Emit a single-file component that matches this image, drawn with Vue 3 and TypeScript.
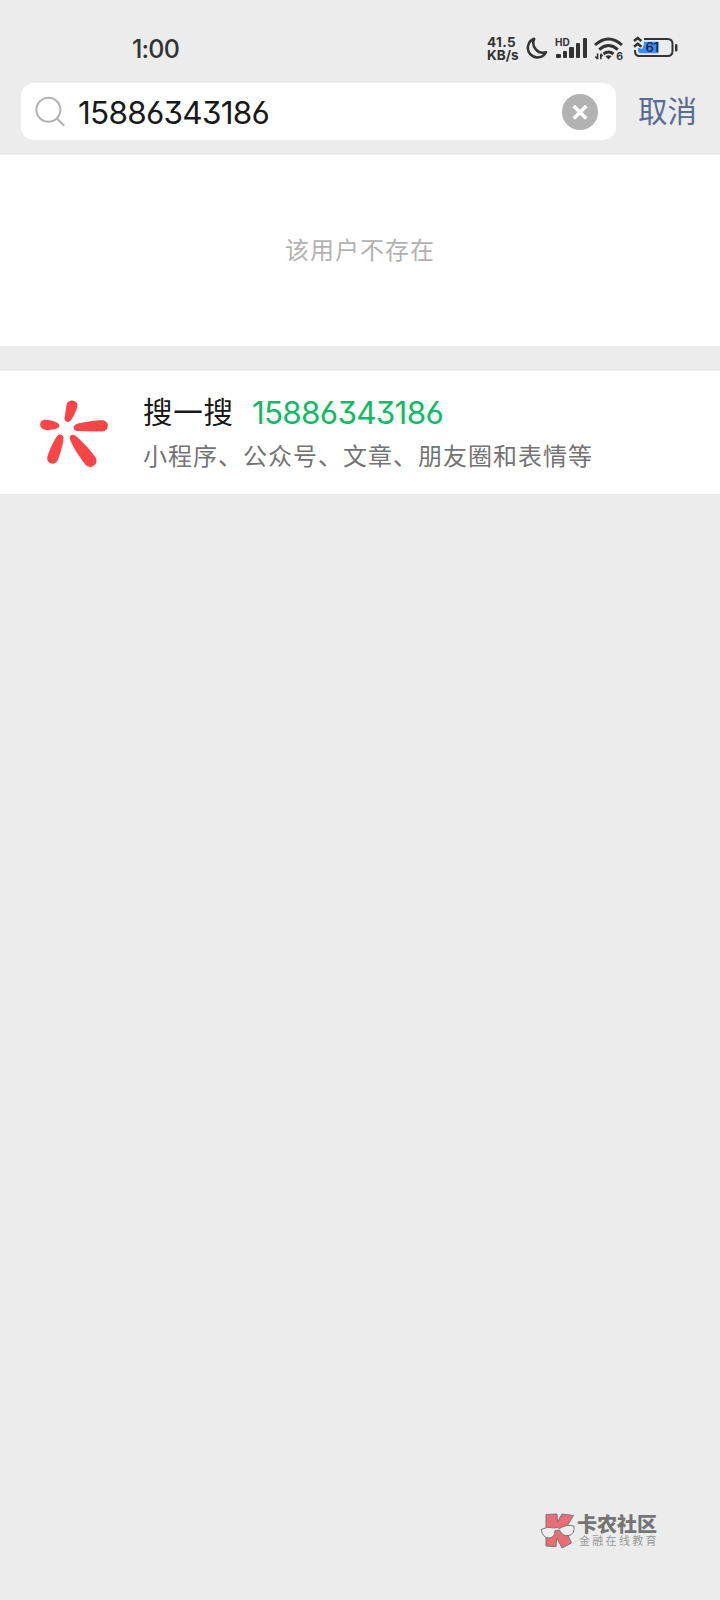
<script setup lang="ts">
import { ref } from 'vue'

const query = ref('15886343186')
const signalBars = [4, 7, 11, 15, 20]
</script>

<template>
  <main class="screen">
    <header class="status">
      <span class="clock">1:00</span>
      <div class="indicators">
        <div class="speed"><span>41.5</span><span>KB/s</span></div>
        <svg class="moon" width="22" height="23" viewBox="0 0 22 23">
          <path d="M8.2 1.8 A9.6 9.6 0 1 0 20 15.2 A9.8 9.8 0 0 1 8.2 1.8Z" fill="none" stroke="#333" stroke-width="2.5" stroke-linejoin="round" />
        </svg>
        <div class="signal">
          <span class="hd">HD</span>
          <i v-for="h in signalBars" :key="h" class="bar" :style="{ height: h + 'px' }"></i>
        </div>
        <svg class="wifi" width="30" height="24" viewBox="0 0 30 24">
          <g fill="none" stroke="#333" stroke-width="3">
            <path d="M1 8 Q14.5 -4 28 8" />
            <path d="M5.2 12.6 Q14.5 4.5 23.8 12.6" />
            <path d="M9.5 17 Q14.5 12.9 19.5 17" />
          </g>
          <path d="M11.5 19.2 Q14.5 17.2 17.5 19.2 L14.5 22.4Z" fill="#333" />
          <path d="M3.6 16.5v5.7M1.4 19.6l2.2 2.4M6.8 22.2V16.8M6.8 17l1.8 2.3" fill="none" stroke="#333" stroke-width="1.6" />
          <text x="22.3" y="23.2" class="wifi-no">6</text>
        </svg>
        <svg class="battery" width="46" height="24" viewBox="0 0 46 24">
          <path d="M11 3 H34.5 Q39.5 3 39.5 8 V15 Q39.5 20 34.5 20 H6.5 Q2 20 2 15 V14" fill="none" stroke="#333" stroke-width="2" />
          <path d="M5 11.5 L9 13 L11 8 V5.7 H25.5 V17.3 H8 Q5 17.3 5 14Z" fill="#3b8dfa" />
          <path d="M1 4.9 L4.7 1.9 L8.4 4.9M1 10.7 L4.7 7.7 L8.4 10.7" fill="none" stroke="#333" stroke-width="2.6" stroke-linejoin="round" />
          <path d="M43.2 9.2v5" stroke="#333" stroke-width="2.4" stroke-linecap="round" />
          <text x="12.4" y="16.4" class="battery-no">61</text>
        </svg>
      </div>
    </header>

    <section class="search">
      <div class="field">
        <svg class="lens" width="30" height="31" viewBox="0 0 30 31">
          <g fill="none" stroke="#b2b2b2" stroke-width="2">
            <circle cx="13.4" cy="13.8" r="12" />
            <path d="M21.9 22.5 L29.2 29.8" />
          </g>
        </svg>
        <span class="number">{{ query }}</span>
        <svg class="clear" width="36" height="36" viewBox="0 0 36 36">
          <circle cx="18" cy="18" r="18" fill="#b2b2b2" />
          <path d="M11.7 12 L24.3 24.6 M24.3 12 L11.7 24.6" stroke="#fff" stroke-width="3.6" />
        </svg>
      </div>
      <span class="cancel">取消</span>
    </section>

    <section class="empty">该用户不存在</section>

    <section class="result">
      <svg class="spark" width="68" height="68" viewBox="0 0 68 68" fill="#fa4548">
        <path d="M26.6 4.4 C27.8-1.4 38.1-.5 37.4 6.2 C37 9.5 32.3 19 30.5 20.8 C28 23.2 24.3 21.5 24.5 18.3Z" />
        <path d="M5 19.8 C8 19.5 15.5 21.5 17.7 23 C20.2 25 19.7 27 17.2 28.3 C15 29.5 8 30.3 5 29.7 C-1.5 28.7-1.5 20.3 5 19.8Z" />
        <path d="M36.5 24 C42 22.3 56 20.3 62 20.3 C69.8 20.3 69.8 31.3 62 31.5 L37 31 C32.6 30.6 32.4 25.7 36.5 24Z" />
        <path d="M16.8 36.5 C18.8 33.2 23.6 34.4 23.5 38 C23.2 44 20.2 54 17.8 60 C14.8 66.6 5.6 63.5 7.4 56.7 C9 50.5 13.6 41.5 16.8 36.5Z" />
        <path d="M29.8 38.5 C29.3 34.3 33.6 33.8 36.2 36.3 C42.5 41.5 51.5 51.5 55.3 57 C60 63.7 50.5 70.7 45.3 64.5 C39.8 57.5 31.2 44.5 29.8 38.5Z" />
      </svg>
      <div class="copy">
        <div class="title">搜一搜<span class="number green">{{ query }}</span></div>
        <div class="subtitle">小程序、公众号、文章、朋友圈和表情等</div>
      </div>
    </section>

    <footer class="brand">
      <svg class="brand-logo" width="36" height="36" viewBox="0 0 36 36">
        <path d="M6 1.5 L17 1 L17.5 9 L22 1 L33.5 2.5 L25 16.5 L31.5 30 L22 35 L16.8 25 L16 33.5 L6 33 Z" fill="#e86d74" stroke="#777" />
        <path d="M1 16.5 Q7 13 14.5 15 Q17 13.5 19.5 15.5 Q26 11 34 13 Q35 21 29 22.5 Q22 23.5 19.5 17 L15 17.5 Q15 24.5 9 25 Q3 25 1 16.5Z" fill="#eee" stroke="#777" />
      </svg>
      <div class="brand-copy"><span class="brand-name">卡农社区</span><span class="brand-tag">金融在线教育</span></div>
    </footer>
  </main>
</template>

<style>
body {
  margin: 0;
  background: #ececec;
}
</style>

<style scoped>
.screen {
  box-sizing: border-box;
  width: 720px;
  height: 1600px;
  display: flex;
  flex-direction: column;
  background: #ececec;
  color: #191919;
  font-family: Inter, "Noto Sans CJK SC", sans-serif;
  overflow: hidden;
}
.status {
  height: 83px;
  box-sizing: border-box;
  padding: 34px 41px 0 132px;
  display: flex;
  justify-content: space-between;
  color: #333;
}
.clock {
  font-size: 25px;
  line-height: 30px;
  font-weight: 500;
  letter-spacing: -0.8px;
}
.indicators {
  display: flex;
  align-items: flex-start;
}
.speed {
  width: 33px;
  display: flex;
  flex-direction: column;
  margin-left: -1px;
  padding-top: 2px;
  font-size: 13.5px;
  line-height: 12.5px;
  font-weight: 700;
  white-space: nowrap;
}
.speed span:first-child { letter-spacing: 0.4px; }
.moon { margin: 3px 0 0 6px; }
.signal {
  position: relative;
  width: 31px;
  height: 20px;
  margin: 4px 0 0 8px;
  display: flex;
  align-items: flex-end;
  justify-content: space-between;
}
.hd {
  position: absolute;
  left: -1px;
  top: -1px;
  font-size: 10px;
  line-height: 10px;
  font-weight: 700;
}
.bar {
  width: 4.5px;
  border-radius: 1px;
  background: #333;
}
.wifi {
  margin: 3px 0 0 7px;
  overflow: visible;
}
.wifi-no { font-size: 10.5px; font-weight: 700; fill: #333; }
.battery { margin: 2px 0 0 9px; }
.battery-no { font-size: 13.5px; font-weight: 500; fill: #16233d; letter-spacing: -0.5px; }
.search {
  height: 72px;
  display: flex;
  align-items: flex-start;
  padding-left: 21px;
}
.field {
  box-sizing: border-box;
  width: 595px;
  height: 57px;
  padding: 0 18px 0 14px;
  display: flex;
  align-items: center;
  border-radius: 13px;
  background: #fff;
}
.number {
  font-size: 31.5px;
  line-height: 38px;
  font-weight: 400;
  letter-spacing: -0.75px;
  font-feature-settings: "cv09", "cv03";
}
.field .number {
  flex: 1;
  margin-left: 13px;
  padding-top: 2px;
}
.cancel {
  margin: 8px 0 0 22px;
  font-size: 29.5px;
  line-height: 40px;
  color: #576b95;
}
.empty {
  box-sizing: border-box;
  height: 191px;
  padding-bottom: 4px;
  display: flex;
  align-items: center;
  justify-content: center;
  background: #fff;
  color: #b2b2b2;
  font-size: 24px;
  letter-spacing: 1px;
}
.result {
  height: 123px;
  margin-top: 25px;
  display: flex;
  align-items: flex-start;
  background: #fff;
}
.spark { margin: 29px 0 0 40px; }
.copy { margin: 21px 0 0 35px; }
.title {
  display: flex;
  font-size: 29.5px;
  line-height: 40px;
  letter-spacing: 0.8px;
}
.green {
  margin-left: 18px;
  line-height: 42px;
  color: #0fbb64;
}
.subtitle {
  margin-top: 4px;
  font-size: 24px;
  line-height: 38px;
  letter-spacing: 1px;
  color: #737373;
}
.brand {
  margin: auto 62px 51px auto;
  display: flex;
  align-items: flex-start;
}
.brand-copy {
  display: flex;
  flex-direction: column;
  width: 82px;
  padding-left: 1px;
  box-sizing: border-box;
  white-space: nowrap;
}
.brand-name {
  margin-top: 1px;
  font-size: 20px;
  line-height: 22px;
  font-weight: 900;
  color: #757575;
}
.brand-tag {
  margin: -1px 0 0 2px;
  font-size: 11px;
  line-height: 13px;
  letter-spacing: 2.3px;
  color: #999;
}
</style>
